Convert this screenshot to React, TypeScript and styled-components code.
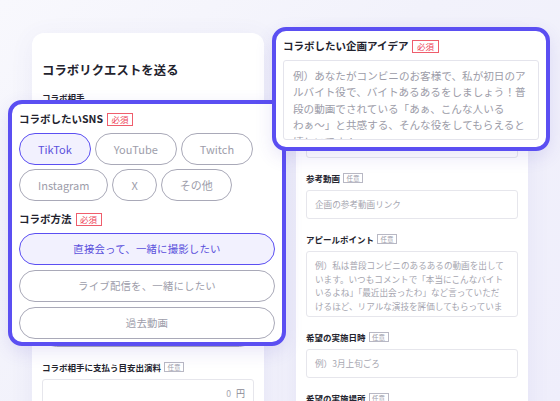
import React from 'react';
import styled, { createGlobalStyle } from 'styled-components';

const purple = '#5b4ff2';
const ink = '#23232e';
const line = '#a9a9b8';
const hint = '#9d9daa';

const GlobalStyle = createGlobalStyle`
    html, body {
        margin: 0;
        padding: 0;
    }
    body {
        font-family: 'Noto Sans CJK JP', 'Noto Sans', sans-serif;
        color: ${ink};
    }
`;

const Stage = styled.div`
    position: relative;
    width: 560px;
    height: 401px;
    overflow: hidden;
    box-sizing: border-box;
    padding: 33px 0 0 32px;
    display: flex;
    gap: 32px;
    align-items: flex-start;
    background: linear-gradient(135deg, #f8f8fd 0%, #f2f2fb 45%, #efeefb 100%);
`;

const Card = styled.div`
    width: 232px;
    height: 420px;
    box-sizing: border-box;
    background: #ffffff;
    border-radius: 12px;
    box-shadow: 0 4px 24px rgba(90, 90, 170, 0.07);
    padding: ${(props: { pt: number }) => props.pt}px 10px 0;
`;

const CardTitle = styled.h1`
    margin: 0 0 13px;
    font-size: 12.3px;
    line-height: 16px;
    font-weight: 700;
    letter-spacing: 0.01em;
`;

const Field = styled.div`
    margin-bottom: 14px;
`;

const SmallLabel = styled.div`
    display: flex;
    align-items: center;
    gap: 3px;
    font-size: 8.5px;
    line-height: 12px;
    font-weight: 700;
    margin-bottom: 6px;
`;

const SmallBadge = styled.span`
    display: inline-block;
    box-sizing: border-box;
    height: 10px;
    padding: 0 2.5px;
    border: 1px solid #b8b8c4;
    color: #9c9caa;
    font-size: 6.5px;
    line-height: 8px;
    font-weight: 400;
`;

const SmallInput = styled.div`
    box-sizing: border-box;
    height: ${(props: { h?: number; right?: boolean }) => props.h || 29}px;
    border: 1px solid #e6e6ec;
    border-radius: 3px;
    padding: ${(props) => (props.h ? '7px 8px' : '0 8px')};
    display: flex;
    align-items: ${(props) => (props.h ? 'flex-start' : 'center')};
    justify-content: ${(props) => (props.right ? 'flex-end' : 'flex-start')};
    font-size: 8.6px;
    line-height: 13.7px;
    color: #a6a6b0;
    white-space: pre-line;
    overflow: hidden;
`;

const Yen = styled.span`
    color: #8a8a96;
    margin-left: 5px;
    font-size: 9px;
`;

const MiniChips = styled.div`
    display: flex;
    flex-wrap: wrap;
    gap: 4px;
`;

const MiniChip = styled.div`
    height: 22px;
    padding: 0 12px;
    box-sizing: border-box;
    border: 1px solid ${line};
    border-radius: 999px;
    font-size: 8px;
    line-height: 20px;
    color: ${hint};
`;

const MiniButtons = styled.div`
    display: flex;
    flex-direction: column;
    gap: 5px;
`;

const MiniButton = styled.div`
    height: 29px;
    box-sizing: border-box;
    border: 1px solid ${line};
    border-radius: 999px;
    font-size: 8px;
    line-height: 27px;
    text-align: center;
    color: ${hint};
`;

const Panel = styled.div`
    position: absolute;
    left: ${(props: { x: number; y: number; w: number; h: number }) => props.x}px;
    top: ${(props) => props.y}px;
    width: ${(props) => props.w}px;
    height: ${(props) => props.h}px;
    box-sizing: border-box;
    background: #ffffff;
    border: 4px solid ${purple};
    border-radius: 14px;
    box-shadow: 0 6px 18px rgba(70, 60, 200, 0.12);
    padding: 8px 7px 0;
`;

const Label = styled.div`
    display: flex;
    align-items: center;
    gap: 4px;
    font-size: 10.5px;
    line-height: 14px;
    font-weight: 700;
    margin-bottom: 7px;
`;

const Required = styled.span`
    display: inline-block;
    box-sizing: border-box;
    height: 13px;
    padding: 0 3.5px;
    border: 1px solid #ef5d6c;
    color: #ee4458;
    font-size: 8.5px;
    line-height: 11px;
    font-weight: 400;
`;

const Chips = styled.div`
    display: flex;
    flex-wrap: wrap;
    gap: 4px;
    width: 240px;
    margin-bottom: 11px;
`;

const Chip = styled.div`
    height: 32px;
    box-sizing: border-box;
    padding: 0 18px;
    border: 1px solid ${(props: { on?: boolean }) => (props.on ? purple : line)};
    background: ${(props) => (props.on ? '#f2f1fe' : '#ffffff')};
    color: ${(props) => (props.on ? '#5a50dc' : hint)};
    border-radius: 999px;
    font-size: 11px;
    line-height: 30px;
`;

const Options = styled.div`
    display: flex;
    flex-direction: column;
    gap: 5px;
`;

const Option = styled.div`
    height: 32px;
    box-sizing: border-box;
    border: 1px solid ${(props: { on?: boolean }) => (props.on ? purple : line)};
    background: ${(props) => (props.on ? '#f2f1fe' : '#ffffff')};
    color: ${(props) => (props.on ? '#5a50dc' : hint)};
    border-radius: 999px;
    font-size: 10.4px;
    line-height: 30px;
    text-align: center;
    letter-spacing: 0.02em;
`;

const IdeaBox = styled.div`
    box-sizing: border-box;
    height: 80px;
    border: 1px solid #e4e4ec;
    border-radius: 3px;
    padding: 7px 9px 0;
    font-size: 10.6px;
    line-height: 16.4px;
    color: #9c9ca8;
    white-space: pre-line;
    overflow: hidden;
`;

const sns = ['TikTok', 'YouTube', 'Twitch', 'Instagram', 'X', 'その他'];
const methods = ['直接会って、一緒に撮影したい', 'ライブ配信を、一緒にしたい', '過去動画'];

const ideaText =
    '例）あなたがコンビニのお客様で、私が初日のア\nルバイト役で、バイトあるあるをしましょう！普\n段の動画でされている「あぁ、こんな人いる\nわぁ〜」と共感する、そんな役をしてもらえると\n嬉しいです！';

const appealText =
    '例）私は普段コンビニのあるあるの動画を出して\nいます。いつもコメントで「本当にこんなバイト\nいるよね」「最近出会ったわ」など言っていただ\nけるほど、リアルな演技を評価してもらっていま\nす。';

export default function App() {
    return (
        <>
            <GlobalStyle />
            <Stage>
                <Card pt={29}>
                    <CardTitle>コラボリクエストを送る</CardTitle>
                    <Field>
                        <SmallLabel>コラボ相手</SmallLabel>
                        <SmallInput>クリエイターを選択</SmallInput>
                    </Field>
                    <Field>
                        <SmallLabel>コラボしたいSNS</SmallLabel>
                        <MiniChips>
                            {sns.map((s) => (
                                <MiniChip key={s}>{s}</MiniChip>
                            ))}
                        </MiniChips>
                    </Field>
                    <Field>
                        <SmallLabel>コラボ方法</SmallLabel>
                        <MiniButtons>
                            {methods.map((m) => (
                                <MiniButton key={m}>{m}</MiniButton>
                            ))}
                        </MiniButtons>
                    </Field>
                    <Field>
                        <SmallLabel>
                            コラボ相手に支払う目安出演料<SmallBadge>任意</SmallBadge>
                        </SmallLabel>
                        <SmallInput right>
                            0<Yen>円</Yen>
                        </SmallInput>
                    </Field>
                </Card>

                <Card pt={14}>
                    <Field>
                        <SmallLabel>コラボしたい企画アイデア</SmallLabel>
                        <SmallInput h={93}>{ideaText}</SmallInput>
                    </Field>
                    <Field>
                        <SmallLabel>
                            参考動画<SmallBadge>任意</SmallBadge>
                        </SmallLabel>
                        <SmallInput>企画の参考動画リンク</SmallInput>
                    </Field>
                    <Field>
                        <SmallLabel>
                            アピールポイント<SmallBadge>任意</SmallBadge>
                        </SmallLabel>
                        <SmallInput h={66}>{appealText}</SmallInput>
                    </Field>
                    <Field>
                        <SmallLabel>
                            希望の実施日時<SmallBadge>任意</SmallBadge>
                        </SmallLabel>
                        <SmallInput>例）3月上旬ごろ</SmallInput>
                    </Field>
                    <Field>
                        <SmallLabel>
                            希望の実施場所<SmallBadge>任意</SmallBadge>
                        </SmallLabel>
                        <SmallInput>例）東京都内</SmallInput>
                    </Field>
                </Card>

                <Panel x={8} y={100} w={278} h={246}>
                    <Label>
                        コラボしたいSNS<Required>必須</Required>
                    </Label>
                    <Chips>
                        {sns.map((s, i) => (
                            <Chip key={s} on={i === 0}>
                                {s}
                            </Chip>
                        ))}
                    </Chips>
                    <Label>
                        コラボ方法<Required>必須</Required>
                    </Label>
                    <Options>
                        {methods.map((m, i) => (
                            <Option key={m} on={i === 0}>
                                {m}
                            </Option>
                        ))}
                    </Options>
                </Panel>

                <Panel x={272} y={27} w={278} h={124}>
                    <Label>
                        コラボしたい企画アイデア<Required>必須</Required>
                    </Label>
                    <IdeaBox>{ideaText}</IdeaBox>
                </Panel>
            </Stage>
        </>
    );
}
